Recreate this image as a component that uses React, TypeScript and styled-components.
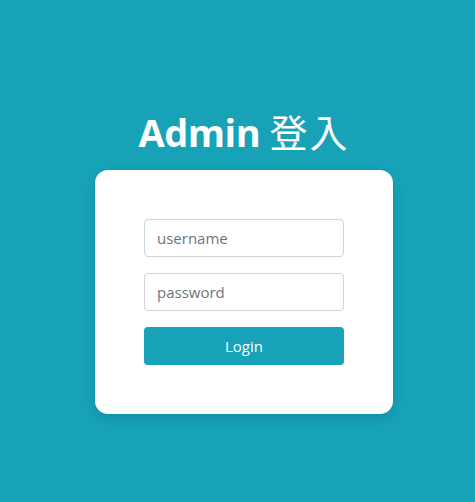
import React from "react";
import styled, { createGlobalStyle } from "styled-components";

const GlobalStyle = createGlobalStyle`
  html, body {
    margin: 0;
    padding: 0;
    background: #17a2b8;
  }
  body {
    font-family: "Open Sans", "Noto Sans", "Noto Sans CJK TC", sans-serif;
  }
  * {
    box-sizing: border-box;
  }
`;

const Page = styled.main`
  min-height: 502px;
  display: flex;
  flex-direction: column;
  align-items: center;
  padding: 103px 0 0 13px;
`;

const Title = styled.h1`
  margin: 0 0 10px;
  font-size: 38px;
  line-height: 56px;
  font-weight: 700;
  color: #ffffff;
  letter-spacing: -0.5px;
`;

const Cjk = styled.span`
  font-family: "Noto Sans CJK TC", sans-serif;
  font-weight: 400;
  letter-spacing: 2px;
`;

const Card = styled.form`
  width: 298px;
  padding: 49px;
  background: #ffffff;
  border-radius: 13px;
  box-shadow: 0 4px 12px rgba(0, 0, 0, 0.12);
  display: flex;
  flex-direction: column;
  gap: 16px;
`;

const Input = styled.input`
  display: block;
  width: 100%;
  height: 38px;
  padding: 6px 12px;
  font-family: inherit;
  font-size: 15px;
  color: #495057;
  background: #ffffff;
  border: 1px solid #ced4da;
  border-radius: 4px;
  outline: none;

  &::placeholder {
    color: #6c757d;
  }
`;

const Button = styled.button`
  height: 38px;
  width: 100%;
  border: none;
  border-radius: 4px;
  background: #17a2b8;
  color: #ffffff;
  font-family: inherit;
  font-size: 15px;
  cursor: pointer;
`;

export default function App() {
  return (
    <>
      <GlobalStyle />
      <Page>
        <Title>
          Admin <Cjk>登入</Cjk>
        </Title>
        <Card onSubmit={(e) => e.preventDefault()}>
          <Input type="text" placeholder="username" />
          <Input type="password" placeholder="password" />
          <Button type="submit">Login</Button>
        </Card>
      </Page>
    </>
  );
}
